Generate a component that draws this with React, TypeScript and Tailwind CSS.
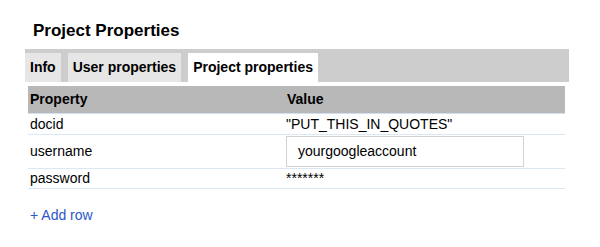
import React from "react";

export default function App() {
  const font = { fontFamily: '"Liberation Sans", Arial, sans-serif' };
  return (
    <div className="w-[600px] h-[247px] bg-white text-black" style={font}>
      <div className="pl-[25px] pt-[21px]">
        <h1 className="ml-[8px] text-[17px] leading-[20px] font-bold">Project Properties</h1>
        <div className="mt-[8px] w-[544px] h-[33px] bg-[#cdcdcd] flex items-end gap-[7px]">
          <div className="h-[29px] px-[5px] flex items-center bg-[#e6e6e6] text-[14px] font-bold">Info</div>
          <div className="h-[29px] px-[5px] flex items-center bg-[#e6e6e6] text-[14px] font-bold">User properties</div>
          <div className="h-[29px] px-[5px] flex items-center bg-white text-[14px] font-bold">Project properties</div>
        </div>
        <div className="mt-[4px] ml-[3px] w-[537px] text-[14px]">
          <div className="h-[28px] flex items-center bg-[#b8b8b8] border-b border-[#cfe0f3] font-bold">
            <div className="w-[256px] pl-[2px]">Property</div>
            <div className="pl-[3px]">Value</div>
          </div>
          <div className="h-[21px] flex items-center border-b border-[#dbe7f5]">
            <div className="w-[256px] pl-[2px]">docid</div>
            <div className="pl-[2px]">"PUT_THIS_IN_QUOTES"</div>
          </div>
          <div className="h-[34px] flex items-center border-b border-[#dbe7f5]">
            <div className="w-[256px] pl-[2px]">username</div>
            <div className="pl-[2px]">
              <div className="w-[238px] h-[31px] border border-[#d2d2d2] flex items-center pl-[11px]">yourgoogleaccount</div>
            </div>
          </div>
          <div className="h-[20px] flex items-center border-b border-[#dbe7f5]">
            <div className="w-[256px] pl-[2px]">password</div>
            <div className="pl-[2px]">*******</div>
          </div>
        </div>
        <div className="mt-[18px] ml-[5px] text-[14px] leading-[16px] text-[#2a58c9]">+ Add row</div>
      </div>
    </div>
  );
}
